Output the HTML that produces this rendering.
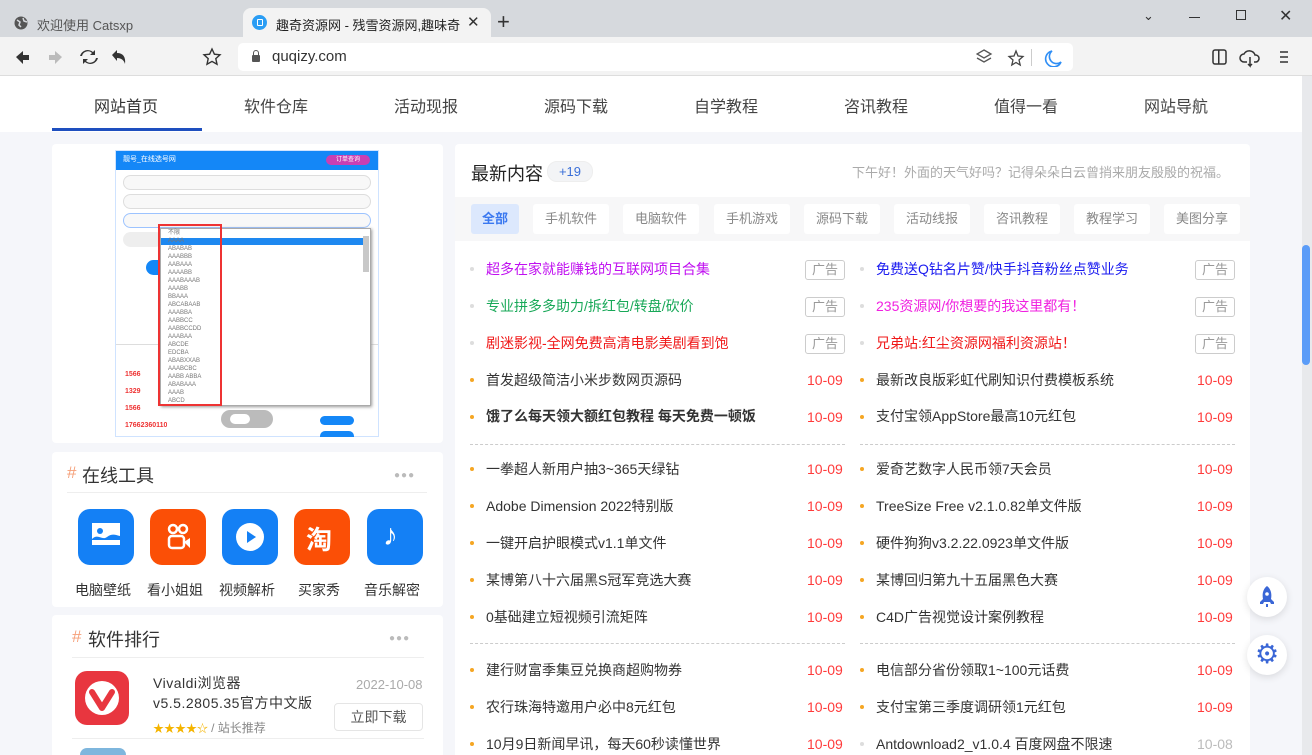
<!DOCTYPE html>
<html><head><meta charset="utf-8"><style>
*{margin:0;padding:0;box-sizing:border-box}
html,body{width:1312px;height:755px;overflow:hidden}
body{position:relative;background:#f5f6fa;font-family:"Liberation Sans","Noto Sans CJK SC",sans-serif;color:#333}
.a{position:absolute}
.tabbar{left:0;top:0;width:1312px;height:37px;background:#d6d9dd}
.tool{left:0;top:37px;width:1312px;height:39px;background:#f3f3f3;border-bottom:1px solid #ddd}
.nav{left:0;top:76px;width:1302px;height:56px;background:#fff}
.nav span{position:absolute;top:17px;font-size:16px;color:#444}
.card{background:#fff;border-radius:4px}
.row{position:absolute;font-size:14px;height:20px;line-height:20px;white-space:nowrap}
.dot{position:absolute;width:4px;height:4px;border-radius:2px;background:#f5a623}
.ad{position:absolute;width:40px;height:20px;border:1px solid #ccc;border-radius:3px;font-size:13px;color:#999;text-align:center;line-height:18px}
.dt{position:absolute;font-size:14px;color:#ff3b3b;line-height:20px;height:20px}
.flt{position:absolute;top:204px;height:30px;line-height:30px;font-size:13px;color:#888;background:#fff;border-radius:3px;text-align:center;width:76px;white-space:nowrap}
.ic{position:absolute;top:509px;width:56px;height:56px;border-radius:12px}
.icl{position:absolute;top:580px;font-size:14px;color:#333}
</style></head><body>
<div class="a tabbar"></div>
<div class="a" style="left:243px;top:8px;width:248px;height:30px;background:#f3f3f3;border-radius:8px 8px 0 0"></div>
<svg class="a" style="left:14px;top:16px" width="14" height="14"><circle cx="7" cy="7" r="6.5" fill="#555"/><path d="M3 4l3 2-1 3 2 2M9 2l1 3 3 1" stroke="#d6d9dd" stroke-width="1.5" fill="none"/></svg>
<div class="a" style="left:37px;top:15px;font-size:13px;color:#555">欢迎使用 Catsxp</div>
<div class="a" style="left:252px;top:15px;width:15px;height:15px;border-radius:50%;background:#2a9df4"></div>
<div class="a" style="left:257px;top:19px;width:6px;height:7px;border:1.5px solid #fff;border-radius:1px"></div>
<div class="a" style="left:276px;top:15px;width:184px;overflow:hidden;white-space:nowrap;font-size:13px;color:#222">趣奇资源网 - 残雪资源网,趣味奇妙</div>
<div class="a" style="left:467px;top:13px;font-size:15px;color:#333">✕</div>
<div class="a" style="left:497px;top:9px;font-size:22px;color:#333">+</div>
<div class="a" style="left:1143px;top:8px;font-size:13px;color:#333">⌄</div>
<div class="a" style="left:1189px;top:17px;width:11px;height:1px;background:#333"></div>
<div class="a" style="left:1236px;top:10px;width:10px;height:10px;border:1px solid #333"></div>
<div class="a" style="left:1279px;top:6px;font-size:16px;color:#333">✕</div>
<div class="a tool"></div>
<svg class="a" style="left:14px;top:48px" width="120" height="18">
<path d="M2 9l7-6v4h6v5H9v4z" fill="#333"/><path d="M48 9l-7-6v4h-6v5h6v4z" fill="#bbb"/>
<path d="M68 8a6 6 0 0 1 10-3l-2 2h5V2l-2 2A8 8 0 0 0 66 8zM82 10a6 6 0 0 1-10 3l2-2h-5v5l2-2a8 8 0 0 0 13-4z" fill="#333"/>
<path d="M98 7l5-5v3c6 0 9 4 8 11-1-4-4-6-8-6v3z" fill="#333"/></svg>
<svg class="a" style="left:202px;top:47px" width="20" height="20"><path d="M10 2l2.4 5.2 5.6.6-4.2 3.8 1.2 5.6L10 14.4 5 17.2l1.2-5.6L2 7.8l5.6-.6z" fill="none" stroke="#333" stroke-width="1.4"/></svg>
<div class="a" style="left:238px;top:43px;width:835px;height:28px;background:#fff;border-radius:5px"></div>
<div class="a" style="left:252px;top:55px;width:8px;height:7px;background:#555;border-radius:1px"></div>
<div class="a" style="left:253px;top:50px;width:6px;height:7px;border:1.5px solid #555;border-radius:3px 3px 0 0"></div>
<div class="a" style="left:272px;top:48px;font-size:15px;color:#333">quqizy.com</div>
<svg class="a" style="left:976px;top:49px" width="90" height="18"><path d="M8 1l7 4-7 4-7-4zM1 9l7 4 7-4" fill="none" stroke="#555" stroke-width="1.3"/><path d="M40 2l2 5 5 .5-4 3.5 1.2 5L40 13.5 35.8 16 37 11l-4-3.5 5-.5z" fill="none" stroke="#444" stroke-width="1.3"/><rect x="55" y="0" width="1" height="17" fill="#ccc"/><path d="M76 2a8 8 0 1 0 9 11A7 7 0 0 1 76 2z" fill="none" stroke="#2f8ef5" stroke-width="1.6"/></svg>
<svg class="a" style="left:1210px;top:48px" width="90" height="20"><rect x="3" y="2" width="13" height="14" rx="2" fill="none" stroke="#333" stroke-width="1.5"/><rect x="8" y="2" width="1.5" height="14" fill="#333"/><path d="M37 14h-3a4 4 0 0 1 0-8 6 6 0 0 1 11 1 3.5 3.5 0 0 1 1 7h-2M40 9v9l-2-2M40 18l2-2" fill="none" stroke="#333" stroke-width="1.5"/><path d="M70 4h8M70 9h8M70 14h8" stroke="#333" stroke-width="1.6"/></svg>
<div class="a" style="left:1302px;top:76px;width:10px;height:679px;background:#e8e9ec"></div>
<div class="a" style="left:1302px;top:245px;width:8px;height:120px;border-radius:4px;background:#5b9cf8"></div>
<div class="a nav">
<span style="left:94px;color:#333">网站首页</span><span style="left:244px">软件仓库</span><span style="left:394px">活动现报</span><span style="left:544px">源码下载</span><span style="left:694px">自学教程</span><span style="left:844px">咨讯教程</span><span style="left:994px">值得一看</span><span style="left:1144px">网站导航</span>
<div class="a" style="left:52px;top:52px;width:150px;height:3px;background:#1e4fbf"></div></div>
<!-- left card 1 -->
<div class="a card" style="left:52px;top:144px;width:391px;height:299px"></div>
<div class="a" style="left:115px;top:150px;width:264px;height:287px;background:#fff;border:1px solid #cfe3ff;overflow:hidden"></div>
<div class="a" style="left:116px;top:151px;width:262px;height:19px;background:#1487f7"></div>
<div class="a" style="left:123px;top:154px;font-size:7px;color:#fff">靓号_在线选号网</div>
<div class="a" style="left:326px;top:155px;width:44px;height:10px;border-radius:5px;background:#c93fb3;font-size:6px;color:#fff;text-align:center;line-height:10px">订单查询</div>
<div class="a" style="left:123px;top:175px;width:248px;height:15px;border:1px solid #ddd;border-radius:8px;background:#f8f8f8"></div>
<div class="a" style="left:123px;top:194px;width:248px;height:15px;border:1px solid #ddd;border-radius:8px;background:#f8f8f8"></div>
<div class="a" style="left:123px;top:213px;width:248px;height:15px;border:1px solid #9cc3ff;border-radius:8px;background:#f8f8f8"></div>
<div class="a" style="left:123px;top:232px;width:40px;height:15px;border-radius:8px;background:#eee"></div>
<div class="a" style="left:146px;top:260px;width:12px;height:15px;border-radius:8px 0 0 8px;background:#1487f7"></div>
<div class="a" style="left:116px;top:344px;width:262px;height:1px;background:#ddd"></div>
<div class="a" style="left:125px;top:366px;font-size:7px;color:#e33;font-weight:bold;line-height:17px;height:70px;overflow:hidden">1566<br>1329<br>1566<br>17662360110</div>
<div class="a" style="left:221px;top:410px;width:52px;height:18px;border-radius:9px;background:#bbb"></div>
<div class="a" style="left:230px;top:414px;width:20px;height:10px;border-radius:5px;background:#fff"></div>
<div class="a" style="left:320px;top:416px;width:34px;height:9px;border-radius:5px;background:#1487f7"></div>
<div class="a" style="left:320px;top:431px;width:34px;height:6px;border-radius:5px 5px 0 0;background:#1487f7"></div>
<div class="a" style="left:160px;top:228px;width:211px;height:178px;background:#fff;border:1px solid #aaa;box-shadow:1px 1px 3px #999"></div>
<div class="a" style="left:161px;top:238px;width:202px;height:7px;background:#1e88f0"></div>
<div class="a" style="left:363px;top:236px;width:6px;height:36px;background:#c8c8c8"></div>
<div class="a" style="left:168px;top:229px;font-size:6px;color:#777;line-height:8px">不限<br>AAAA<br>ABABAB<br>AAABBB<br>AABAAA<br>AAAABB<br>AAABAAAB<br>AAABB<br>BBAAA<br>ABCABAAB<br>AAABBA<br>AABBCC<br>AABBCCDD<br>AAABAA<br>ABCDE<br>EDCBA<br>ABABXXAB<br>AAABCBC<br>AABB ABBA<br>ABABAAA<br>AAAB<br>ABCD</div>
<div class="a" style="left:158px;top:224px;width:64px;height:182px;border:2px solid #ee3333"></div>
<!-- tools card -->
<div class="a card" style="left:52px;top:452px;width:391px;height:155px"></div>
<div class="a" style="left:67px;top:463px;font-size:17px;color:#f5a07a">#</div>
<div class="a" style="left:82px;top:462px;font-size:18px;color:#333">在线工具</div>
<div class="a" style="left:394px;top:470px;font-size:10px;color:#bbb;letter-spacing:1px">●●●</div>
<div class="a" style="left:67px;top:492px;width:360px;height:1px;background:#eee"></div>
<div class="ic" style="left:78px;background:#1480f5"></div>
<svg class="a" style="left:92px;top:523px" width="28" height="28"><rect x="0" y="0" width="28" height="22" fill="#fff"/><circle cx="8" cy="8" r="3" fill="#1480f5"/><path d="M0 16c6-6 10 2 15-2s9-2 13-1v4H0z" fill="#1480f5"/></svg>
<div class="ic" style="left:150px;background:#fb4f06"></div>
<svg class="a" style="left:164px;top:523px" width="28" height="30"><circle cx="9" cy="6" r="4" fill="none" stroke="#fff" stroke-width="2.5"/><circle cx="19" cy="6" r="4" fill="none" stroke="#fff" stroke-width="2.5"/><rect x="5" y="13" width="15" height="12" rx="3" fill="none" stroke="#fff" stroke-width="2.5"/><path d="M20 19l6-4v10z" fill="#fff"/></svg>
<div class="ic" style="left:222px;background:#1480f5"></div>
<svg class="a" style="left:235px;top:522px" width="30" height="30"><circle cx="15" cy="15" r="14" fill="#fff"/><path d="M12 9l9 6-9 6z" fill="#1480f5"/></svg>
<div class="ic" style="left:294px;background:#fb4f06"></div>
<div class="a" style="left:306px;top:520px;font-size:26px;color:#fff;font-weight:bold">淘</div>
<div class="ic" style="left:367px;background:#1480f5"></div>
<div class="a" style="left:383px;top:519px;font-size:30px;color:#fff">♪</div>
<div class="icl" style="left:75px">电脑壁纸</div><div class="icl" style="left:147px">看小姐姐</div><div class="icl" style="left:219px">视频解析</div><div class="icl" style="left:298px">买家秀</div><div class="icl" style="left:364px">音乐解密</div>
<!-- software card -->
<div class="a card" style="left:52px;top:615px;width:391px;height:150px"></div>
<div class="a" style="left:72px;top:627px;font-size:17px;color:#f5a07a">#</div>
<div class="a" style="left:88px;top:626px;font-size:18px;color:#333">软件排行</div>
<div class="a" style="left:389px;top:633px;font-size:10px;color:#bbb;letter-spacing:1px">●●●</div>
<div class="a" style="left:72px;top:657px;width:352px;height:1px;background:#eee"></div>
<div class="a" style="left:75px;top:671px;width:54px;height:54px;border-radius:12px;background:#e8363f"></div>
<svg class="a" style="left:81px;top:677px" width="42" height="42"><circle cx="21" cy="21" r="17" fill="#fff"/><path d="M11 15l10 16 10-16" fill="none" stroke="#e8363f" stroke-width="6" stroke-linecap="round" stroke-linejoin="round"/></svg>
<div class="a" style="left:153px;top:673px;font-size:14px;color:#333;line-height:20px;letter-spacing:.5px">Vivaldi浏览器<br>v5.5.2805.35官方中文版</div>
<div class="a" style="left:153px;top:719px;font-size:11px;color:#f5b400">★★★★☆ <span style="color:#888;font-size:12px">/ 站长推荐</span></div>
<div class="a" style="left:356px;top:677px;font-size:13px;color:#aaa">2022-10-08</div>
<div class="a" style="left:334px;top:703px;width:89px;height:28px;border:1px solid #e5e5e5;border-radius:4px;font-size:14px;color:#555;text-align:center;line-height:26px">立即下载</div>
<div class="a" style="left:72px;top:738px;width:352px;height:1px;background:#eee"></div>
<div class="a" style="left:80px;top:748px;width:46px;height:7px;border-radius:23px 23px 0 0;background:#7eb6dd"></div>
<!-- right panel -->
<div class="a" style="left:455px;top:144px;width:795px;height:611px;background:#fff;border-radius:4px 4px 0 0"></div>
<div class="a" style="left:471px;top:160px;font-size:18px;color:#222">最新内容</div>
<div class="a" style="left:547px;top:161px;width:46px;height:21px;border-radius:10px;background:#f3f4f6;border:1px solid #eee;font-size:13px;color:#3a6fd8;text-align:center;line-height:19px">+19</div>
<div class="a" style="left:852px;top:162px;font-size:13px;color:#aaa">下午好！外面的天气好吗？记得朵朵白云曾捎来朋友殷殷的祝福。</div>
<div class="a" style="left:455px;top:197px;width:795px;height:44px;background:#f7f7f8"></div>
<div class="flt" style="left:471px;width:48px;background:#dce8fd;color:#3a78f0;font-weight:bold">全部</div>
<div class="flt" style="left:533px">手机软件</div><div class="flt" style="left:623px">电脑软件</div><div class="flt" style="left:714px">手机游戏</div><div class="flt" style="left:804px">源码下载</div><div class="flt" style="left:894px">活动线报</div><div class="flt" style="left:984px">咨讯教程</div><div class="flt" style="left:1074px">教程学习</div><div class="flt" style="left:1164px">美图分享</div>
<!-- ad rows -->
<div class="dot" style="left:470px;top:267px;background:#ddd"></div><div class="row" style="left:486px;top:259px;color:#c010f0">超多在家就能赚钱的互联网项目合集</div><div class="ad" style="left:805px;top:260px">广告</div>
<div class="dot" style="left:860px;top:267px;background:#ddd"></div><div class="row" style="left:876px;top:259px;color:#1a1af0">免费送Q钻名片赞/快手抖音粉丝点赞业务</div><div class="ad" style="left:1195px;top:260px">广告</div>
<div class="dot" style="left:470px;top:304px;background:#ddd"></div><div class="row" style="left:486px;top:296px;color:#18a858">专业拼多多助力/拆红包/转盘/砍价</div><div class="ad" style="left:805px;top:297px">广告</div>
<div class="dot" style="left:860px;top:304px;background:#ddd"></div><div class="row" style="left:876px;top:296px;color:#f020e0">235资源网/你想要的我这里都有！</div><div class="ad" style="left:1195px;top:297px">广告</div>
<div class="dot" style="left:470px;top:341px;background:#ddd"></div><div class="row" style="left:486px;top:333px;color:#f01818">剧迷影视-全网免费高清电影美剧看到饱</div><div class="ad" style="left:805px;top:334px">广告</div>
<div class="dot" style="left:860px;top:341px;background:#ddd"></div><div class="row" style="left:876px;top:333px;color:#f01818">兄弟站:红尘资源网福利资源站！</div><div class="ad" style="left:1195px;top:334px">广告</div>
<!-- regular rows -->
<div class="dot" style="left:470px;top:378px"></div><div class="row" style="left:486px;top:370px">首发超级简洁小米步数网页源码</div><div class="dt" style="left:807px;top:370px">10-09</div>
<div class="dot" style="left:860px;top:378px"></div><div class="row" style="left:876px;top:370px">最新改良版彩虹代刷知识付费模板系统</div><div class="dt" style="left:1197px;top:370px">10-09</div>
<div class="dot" style="left:470px;top:415px"></div><div class="row" style="left:486px;top:406px;font-weight:bold">饿了么每天领大额红包教程 每天免费一顿饭</div><div class="dt" style="left:807px;top:407px">10-09</div>
<div class="dot" style="left:860px;top:415px"></div><div class="row" style="left:876px;top:406px">支付宝领AppStore最高10元红包</div><div class="dt" style="left:1197px;top:407px">10-09</div>
<div class="a" style="left:470px;top:444px;width:375px;border-top:1px dashed #ccc"></div><div class="a" style="left:860px;top:444px;width:375px;border-top:1px dashed #ccc"></div>
<div class="dot" style="left:470px;top:467px"></div><div class="row" style="left:486px;top:459px">一拳超人新用户抽3~365天绿钻</div><div class="dt" style="left:807px;top:459px">10-09</div>
<div class="dot" style="left:860px;top:467px"></div><div class="row" style="left:876px;top:459px">爱奇艺数字人民币领7天会员</div><div class="dt" style="left:1197px;top:459px">10-09</div>
<div class="dot" style="left:470px;top:504px"></div><div class="row" style="left:486px;top:496px">Adobe Dimension 2022特别版</div><div class="dt" style="left:807px;top:496px">10-09</div>
<div class="dot" style="left:860px;top:504px"></div><div class="row" style="left:876px;top:496px">TreeSize Free v2.1.0.82单文件版</div><div class="dt" style="left:1197px;top:496px">10-09</div>
<div class="dot" style="left:470px;top:541px"></div><div class="row" style="left:486px;top:533px">一键开启护眼模式v1.1单文件</div><div class="dt" style="left:807px;top:533px">10-09</div>
<div class="dot" style="left:860px;top:541px"></div><div class="row" style="left:876px;top:533px">硬件狗狗v3.2.22.0923单文件版</div><div class="dt" style="left:1197px;top:533px">10-09</div>
<div class="dot" style="left:470px;top:578px"></div><div class="row" style="left:486px;top:570px">某博第八十六届黑S冠军竞选大赛</div><div class="dt" style="left:807px;top:570px">10-09</div>
<div class="dot" style="left:860px;top:578px"></div><div class="row" style="left:876px;top:570px">某博回归第九十五届黑色大赛</div><div class="dt" style="left:1197px;top:570px">10-09</div>
<div class="dot" style="left:470px;top:615px"></div><div class="row" style="left:486px;top:607px">0基础建立短视频引流矩阵</div><div class="dt" style="left:807px;top:607px">10-09</div>
<div class="dot" style="left:860px;top:615px"></div><div class="row" style="left:876px;top:607px">C4D广告视觉设计案例教程</div><div class="dt" style="left:1197px;top:607px">10-09</div>
<div class="a" style="left:470px;top:643px;width:375px;border-top:1px dashed #ccc"></div><div class="a" style="left:860px;top:643px;width:375px;border-top:1px dashed #ccc"></div>
<div class="dot" style="left:470px;top:668px"></div><div class="row" style="left:486px;top:660px">建行财富季集豆兑换商超购物券</div><div class="dt" style="left:807px;top:660px">10-09</div>
<div class="dot" style="left:860px;top:668px"></div><div class="row" style="left:876px;top:660px">电信部分省份领取1~100元话费</div><div class="dt" style="left:1197px;top:660px">10-09</div>
<div class="dot" style="left:470px;top:705px"></div><div class="row" style="left:486px;top:697px">农行珠海特邀用户必中8元红包</div><div class="dt" style="left:807px;top:697px">10-09</div>
<div class="dot" style="left:860px;top:705px"></div><div class="row" style="left:876px;top:697px">支付宝第三季度调研领1元红包</div><div class="dt" style="left:1197px;top:697px">10-09</div>
<div class="dot" style="left:470px;top:742px"></div><div class="row" style="left:486px;top:734px">10月9日新闻早讯，每天60秒读懂世界</div><div class="dt" style="left:807px;top:734px">10-09</div>
<div class="dot" style="left:860px;top:742px;background:#ddd"></div><div class="row" style="left:876px;top:734px">Antdownload2_v1.0.4 百度网盘不限速</div><div class="dt" style="left:1197px;top:734px;color:#bbb">10-08</div>
<!-- floating -->
<div class="a" style="left:1247px;top:577px;width:40px;height:40px;border-radius:50%;background:#fff;box-shadow:0 2px 8px rgba(0,0,0,.12)"></div>
<svg class="a" style="left:1258px;top:586px" width="18" height="22"><path d="M9 0c4 3 5 8 4 13l3 3v2h-3l-1-2H6l-1 2H2v-2l3-3C4 8 5 3 9 0z" fill="#3a66d6"/><circle cx="9" cy="8" r="1.8" fill="#fff"/><rect x="8" y="18" width="2" height="3" fill="#3a66d6"/></svg>
<div class="a" style="left:1247px;top:635px;width:40px;height:40px;border-radius:50%;background:#fff;box-shadow:0 2px 8px rgba(0,0,0,.12)"></div>
<div class="a" style="left:1255px;top:639px;font-size:27px;color:#3a66d6;line-height:30px">⚙</div>
</body></html>
